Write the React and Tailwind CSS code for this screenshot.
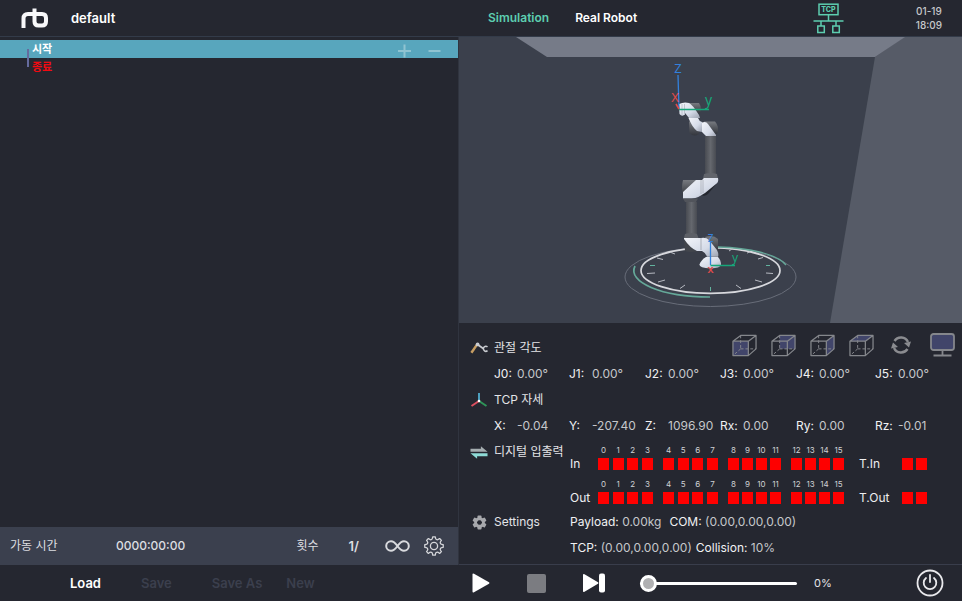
import React from "react";

const COLUMNS = "grid grid-cols-[458fr_504fr]";

function Logo() {
  return (
    <svg className="h-5 w-7" viewBox="0 0 28 20" fill="none" stroke="#f8f8fa" strokeWidth="4" aria-hidden="true">
      <path d="M2.500 20V10.500Q2.500 6 7 6H21Q25 6 25 10V13.500Q25 17.500 21 17.500H17.500Q13.500 17.500 13.500 13.500V0.500" />
    </svg>
  );
}

function NetworkIcon() {
  return (
    <svg className="h-[31px] w-[31px]" viewBox="0 0 31 31" fill="none" stroke="#5dceb0" strokeWidth="1.500" aria-label="TCP">
      <rect x="6" y="1.200" width="19" height="10.500" />
      <path d="M15.500 12V18M0.500 18H30.500M8 18V23M23 18V23" />
      <rect x="4.800" y="23" width="6.500" height="6.500" />
      <rect x="19.800" y="23" width="6.500" height="6.500" />
      <text x="15.500" y="9" textAnchor="middle" fontSize="7" fontWeight="800" fontFamily="Inter, sans-serif" fill="#5dceb0" stroke="none">TCP</text>
    </svg>
  );
}

function Scene() {
  const white = "url(#shell)";
  const dark = "url(#joint)";
  return (
    <svg className="block h-[286px] w-full bg-[#3b404c]" viewBox="459 37 503 286" preserveAspectRatio="xMidYMid slice" role="img" aria-label="Robot arm">
      <defs>
        <linearGradient id="shell" x1="0" y1="0" x2="1" y2="1">
          <stop offset="0" stopColor="#f3f5fa" />
          <stop offset="0.600" stopColor="#d5dbe8" />
          <stop offset="1" stopColor="#9ca2b0" />
        </linearGradient>
        <linearGradient id="joint" x1="0" y1="0" x2="0" y2="1">
          <stop offset="0" stopColor="#777a80" />
          <stop offset="0.500" stopColor="#54575d" />
          <stop offset="1" stopColor="#33363d" />
        </linearGradient>
        <linearGradient id="tube">
          <stop offset="0" stopColor="#484b52" />
          <stop offset="0.500" stopColor="#65686e" />
          <stop offset="1" stopColor="#484b52" />
        </linearGradient>
      </defs>
      <path d="M904 37H962V323H830L875 57Z" fill="#565b67" />
      <path d="M516 37H905L875 57H547Z" fill="#767b88" />

      <g fill="none">
        <ellipse cx="710.500" cy="277" rx="85.500" ry="29.500" stroke="#686d79" strokeWidth="1" />
        <ellipse cx="710.500" cy="270.500" rx="69.500" ry="22.800" fill="#3a3e49" stroke="#d7d8dd" strokeWidth="1.700" />
        <path d="M635 266C627 282 661 297 710 297" stroke="#65a899" strokeWidth="1.700" />
        <path d="M718 247C750 248 777 254 786 265" stroke="#65a899" strokeWidth="1.300" />
        <path d="M736 285L741 288.500M755 280L762 282M766 273L773 273.500M758 259L763 257.500M747 253L750 252M729 251L732 249M685 285L680 288.500M665 280L658 282M655 273L647 273.500M663 259.500L657 258M675 254L671 252.500" stroke="#b7bac2" />
        <path d="M710.500 287V291M766 265.500H770M650 265.500H655" stroke="#62b39e" />
      </g>

      <g>
        <path d="M687 103H699Q702 108 700 113L697 114Z" fill={dark} />
        <path d="M679 104Q684 101.500 689 103Q692 104 699 115L700 118H689L685 113V114.500Q682 117 679.500 114Z" fill={white} />
        <path d="M682 104V115M684.500 104V114" stroke="#9a9ea8" strokeWidth="0.500" />
        <path d="M689 121L699 130V134Q694 137.500 689.500 133Z" fill={dark} />
        <path d="M688.500 118H698Q699 121 702 122V132L697 131Q692 127 688.500 118Z" fill={white} />
        <path d="M704 121.500H715Q720 127 717 134L709 132Z" fill={dark} />
        <path d="M702 122.500Q706 121 708 124L716 135V137H707L702 132Z" fill={white} />
        <path d="M705 136H716V175H705Z" fill="url(#tube)" />
        <path d="M704 174Q711 172 717 174L718 179H703Z" fill="#62656c" />
        <path d="M683 180H699V196H683Q681 188 683 180Z" fill={dark} />
        <path d="M701 195L705 190L718 182L708 194Q705 197 701 195Z" fill="#24272f" />
        <path d="M683 192L696 180H702L704 178H718Q719 182 716 184L705 193L700 196Q697 199 683 198.500Z" fill={white} />
        <path d="M701 180V194M703 180V193" stroke="#888c95" strokeWidth="0.500" />
        <path d="M683 198.500H698L696 202H685Z" fill="#51545b" />
        <path d="M686 202H697V234H686Z" fill="url(#tube)" />
        <path d="M685 234Q691 232 697 234L698.500 238H684Z" fill="#5d6067" />
        <path d="M684 240L698 251Q690 253 685 251Z" fill="#42454c" />
        <path d="M705 237Q713 234 718 239V251L711 248Z" fill={dark} />
        <path d="M684 238H701Q706 237 709 240L717 250Q719 254 718 257H707Q706 253 702 251H697Q690 248 684 239Z" fill={white} />
        <path d="M701 238V250M707 256.500H718" stroke="#888c95" strokeWidth="0.600" />
        <path d="M706 257H718Q721 260 721 265Q720 268 711 268.500Q699 268 699.500 264.500Q701 260 706 257Z" fill={white} />
      </g>

      <g fill="none" strokeWidth="1.300">
        <path d="M678 75L679 109M710.500 242V265" stroke="#3281dd" />
        <path d="M679 109.500H709M710.500 265.500H735" stroke="#17a67a" />
        <path d="M676 104L679 109" stroke="#e04b4b" strokeWidth="1.600" />
      </g>
      <g fontFamily="Noto Sans, sans-serif" textAnchor="middle">
        <text x="678" y="73" fontSize="13" fill="#3281dd">Z</text>
        <text x="675" y="102" fontSize="13" fill="#e04b4b">X</text>
        <text x="708.500" y="105" fontSize="14" fill="#17a67a">y</text>
        <text x="710.500" y="242" fontSize="10" fill="#3281dd">Z</text>
        <text x="710.500" y="273" fontSize="9" fontWeight="700" fill="#e04b4b">X</text>
        <text x="735" y="262" fontSize="12" fill="#17a67a">y</text>
      </g>
    </svg>
  );
}

const FACES = {
  front: "M1 7H17V22H1Z",
  back: "M9 1H25V15H9Z",
  right: "M17 7L25 1V15L17 22Z",
  top: "M1 7L9 1H25L17 7Z",
};

function CubeIcon({ face }) {
  return (
    <svg className="h-[23px] w-[26px]" viewBox="0 0 26 23" fill="none" stroke="#85878c" strokeWidth="1.300" strokeLinejoin="round" aria-hidden="true">
      <path d={FACES[face]} fill="#41456a" stroke="none" />
      <path d="M1 7H17V22H1ZM1 7L9 1H25L17 7M25 1V15L17 22" />
      <path d="M9 1V15M9 15L1 22M9 15H25" strokeDasharray="3 2" strokeWidth="1" />
    </svg>
  );
}

function RefreshIcon() {
  return (
    <svg className="h-5 w-5" viewBox="0 0 20 20" fill="none" stroke="#8b8c90" strokeWidth="2.400" aria-hidden="true">
      <path d="M3.500 6A7.700 7.700 0 0 1 17 7M16.500 14A7.700 7.700 0 0 1 3 13" />
      <path d="M13 8L20 6.500L18 12.500ZM7 12L0 13.500L2 7.500Z" fill="#8b8c90" stroke="none" />
    </svg>
  );
}

function MonitorIcon() {
  return (
    <svg className="h-6 w-[25px]" viewBox="0 0 25 24" fill="#41456a" stroke="#85878c" strokeWidth="1.800" aria-hidden="true">
      <rect x="1" y="1" width="23" height="16" rx="2.500" />
      <path d="M12.500 17V22.500M3.500 22.500H21.500" />
    </svg>
  );
}

function JointIcon() {
  return (
    <svg className="h-3 w-[19px]" viewBox="0 0 19 12" fill="none" aria-hidden="true">
      <path d="M1.500 11L7 3" stroke="#c79e63" strokeWidth="2.600" />
      <path d="M7.500 2L14 6.500" stroke="#c9cbd0" strokeWidth="2" />
      <circle cx="8" cy="2.200" r="2" fill="#c9cbd0" />
      <path d="M18.500 4.800A2.600 2.600 0 1 0 18.500 8.800" stroke="#c9cbd0" strokeWidth="1.600" />
    </svg>
  );
}

function AxesIcon() {
  return (
    <svg className="h-[14px] w-[18px]" viewBox="0 0 18 14" strokeWidth="2" aria-hidden="true">
      <path d="M9 8V0" stroke="#4c9fbe" />
      <path d="M9 8L1.500 13" stroke="#dc5060" />
      <path d="M9 8L16.500 13" stroke="#2e9458" />
      <circle cx="9" cy="8" r="1.300" fill="#fff" />
    </svg>
  );
}

function SwapIcon() {
  return (
    <svg className="h-[13px] w-[19px]" viewBox="0 0 19 13" aria-hidden="true">
      <path d="M0.500 2.500H11.500V0L18.500 5.800H0.500Z" fill="#a5adb0" />
      <path d="M18.500 7.200H0.500L7.500 13V10.500H18.500Z" fill="#8edbd6" />
    </svg>
  );
}

const TEETH = [0, 60, 120, 180, 240, 300];

function GearIcon() {
  return (
    <svg className="h-[15px] w-[15px]" viewBox="0 0 16 16" fill="#a7a8ac" aria-hidden="true">
      {TEETH.map((a) => (
        <rect key={a} x="5.800" y="0.500" width="4.400" height="5" rx="1" transform={`rotate(${a} 8 8)`} />
      ))}
      <circle cx="8" cy="8" r="4.200" fill="none" stroke="#a7a8ac" strokeWidth="3" />
    </svg>
  );
}

const COG = Array.from({ length: 8 }, (_, i) => {
  const at = (r, deg) => {
    const t = ((i * 45 + deg) * Math.PI) / 180;
    return `${(10 + r * Math.sin(t)).toFixed(2)} ${(10 - r * Math.cos(t)).toFixed(2)}`;
  };
  return `${i ? "L" : "M"}${at(9.3, -8)}L${at(9.3, 8)}Q${at(6.6, 14)} ${at(7, 22.5)}Q${at(6.6, 31)} ${at(9.3, 37)}`;
}).join("") + "Z";

function CogOutlineIcon() {
  return (
    <svg className="h-5 w-5" viewBox="0 0 20 20" fill="none" stroke="#d5d6da" strokeWidth="1.300" strokeLinejoin="round" aria-hidden="true">
      <path d={COG} />
      <circle cx="10" cy="10" r="3.600" />
    </svg>
  );
}

function InfinityIcon() {
  return (
    <svg className="h-3 w-[25px]" viewBox="0 0 25 12" fill="none" stroke="#d9dade" strokeWidth="2" aria-hidden="true">
      <path d="M12.500 6C10 2.500 8.500 1.200 6 1.200A4.800 4.800 0 0 0 6 10.800C8.500 10.800 10 9.500 12.500 6C15 2.500 16.500 1.200 19 1.200A4.800 4.800 0 0 1 19 10.800C16.500 10.800 15 9.500 12.500 6Z" />
    </svg>
  );
}

function PowerIcon() {
  return (
    <svg className="h-7 w-7" viewBox="0 0 28 28" fill="none" stroke="#e9e9ec" strokeWidth="1.800" strokeLinecap="round" aria-hidden="true">
      <circle cx="14" cy="14" r="12.500" />
      <path d="M10 9A6.300 6.300 0 1 0 18 9M14 6V13" />
    </svg>
  );
}

function Heading({ icon, children }) {
  return (
    <h2 className="flex h-[26px] w-[100px] shrink-0 items-center gap-[6px] whitespace-nowrap text-[#e4e4e7]">
      <span className="flex w-[18px] justify-center">{icon}</span>
      {children}
    </h2>
  );
}

function Readings({ items }) {
  return (
    <dl className="ml-6 grid h-[26px] grid-cols-[75fr_76fr_75fr_76fr_79fr_80fr] items-center">
      {items.map(([label, value]) => (
        <div key={label} className="flex gap-px whitespace-nowrap">
          <dt className="w-[22px] text-[#f1f1f3]">{label}:</dt>
          <dd className="text-[#c6c7cb]">{value}</dd>
        </div>
      ))}
    </dl>
  );
}

const GROUPS = [
  { ports: [0, 1, 2, 3], width: "w-[55px]" },
  { ports: [4, 5, 6, 7], width: "w-[55px]" },
  { ports: [8, 9, 10, 11], width: "w-[53px]" },
  { ports: [12, 13, 14, 15], width: "w-[53px]" },
];

function PortRow({ name }) {
  return (
    <div className="flex items-end leading-3 text-[#eeeef0]">
      <span className="w-7">{name}</span>
      <div className="flex gap-[10px]">
        {GROUPS.map(({ ports, width }) => (
          <div key={ports[0]} className={`flex justify-between ${width}`}>
            {ports.map((n) => (
              <div key={n} className="flex w-[11px] flex-col items-center gap-[2px]">
                <span className="text-[8px] text-[#d0d1d4]">{n}</span>
                <span className="h-3 w-[11px] bg-[#fe0000]" />
              </div>
            ))}
          </div>
        ))}
      </div>
      <span className="ml-[15px] w-[43px]">T.{name}</span>
      <span className="mr-[3px] h-3 w-[11px] bg-[#fe0000]" />
      <span className="h-3 w-[11px] bg-[#fe0000]" />
    </div>
  );
}

function Field({ label, children }) {
  return (
    <span className="text-[#f1f1f3]">
      {label}: <span className="text-[#c6c7cb]">{children}</span>
    </span>
  );
}

export default function App() {
  return (
    <div className="flex min-h-screen flex-col bg-[#252730] font-['Inter','Noto_Sans_CJK_KR',sans-serif] text-[12px] leading-4 text-white">
      <header className={`${COLUMNS} h-[37px] border-b border-[#333b49]`}>
        <div className="flex items-center gap-[22px] pl-[21px]">
          <Logo />
          <h1 className="text-[13px] font-semibold">default</h1>
        </div>
        <div className="flex items-center pl-[30px] pr-5">
          <nav className="flex gap-[26px] text-[12px] font-semibold">
            <a href="#simulation" className="text-[#5dceb0]">Simulation</a>
            <a href="#real">Real Robot</a>
          </nav>
          <div className="ml-auto flex items-center gap-[72px]">
            <NetworkIcon />
            <time className="text-center text-[10px] font-medium leading-[14px] text-[#c6c7cb]">
              01-19
              <br />
              18:09
            </time>
          </div>
        </div>
      </header>

      <main className={`${COLUMNS} grow`}>
        <section className="flex flex-col">
          <ul className="grow pt-[3px] text-[11px] font-bold leading-[18px]">
            <li className="relative flex h-[18px] items-center bg-[#58a6bd] pl-8 pr-[17px]">
              시작
              <span className="absolute left-[27px] top-[9px] h-[18px] w-[2px] bg-[#656b9e]" />
              <div className="ml-auto flex gap-4">
                <button type="button" aria-label="Add" className="flex h-[18px] w-[15px] items-end">
                  <svg className="h-[14px] w-[15px]" viewBox="0 0 15 14" stroke="#8fc3d1" strokeWidth="2" aria-hidden="true"><path d="M1 7H14M7.500 0.500V13.500" /></svg>
                </button>
                <button type="button" aria-label="Remove" className="flex h-[18px] w-[13px] items-end">
                  <svg className="h-[14px] w-[13px]" viewBox="0 0 13 14" stroke="#8fc3d1" strokeWidth="2" aria-hidden="true"><path d="M0.500 7H12.500" /></svg>
                </button>
              </div>
            </li>
            <li className="h-[18px] pl-8 text-[#f30a12]">종료</li>
          </ul>
          <div className="flex h-[38px] items-center bg-[#3b404e] pl-[10px] pr-[14px] text-[#dddee1]">
            <span className="w-[106px]">가동 시간</span>
            <span className="font-medium">0000:00:00</span>
            <span className="ml-auto">횟수</span>
            <span className="ml-[30px] text-[13px] font-semibold">1/</span>
            <button type="button" aria-label="Repeat forever" className="ml-[26px]"><InfinityIcon /></button>
            <button type="button" aria-label="Options" className="ml-[14px]"><CogOutlineIcon /></button>
          </div>
        </section>

        <section className="flex flex-col border-l border-[#30343f]">
          <Scene />
          <div className="grow border-b border-[#393d4b] pl-[11px] pr-[7px] pt-3">
            <div className="flex h-[26px] items-center">
              <Heading icon={<JointIcon />}>관절 각도</Heading>
              <div className="mb-[6px] ml-auto flex items-center gap-[14px]">
                {["front", "back", "right", "top"].map((face) => (
                  <button key={face} type="button" aria-label={`View ${face}`} className="flex w-[25px] justify-center"><CubeIcon face={face} /></button>
                ))}
                <button type="button" aria-label="Reset view" className="flex w-[25px] justify-center"><RefreshIcon /></button>
                <button type="button" aria-label="Display" className="ml-[3px]"><MonitorIcon /></button>
              </div>
            </div>
            <Readings items={[["J0", "0.00°"], ["J1", "0.00°"], ["J2", "0.00°"], ["J3", "0.00°"], ["J4", "0.00°"], ["J5", "0.00°"]]} />
            <Heading icon={<AxesIcon />}>TCP 자세</Heading>
            <Readings items={[["X", "-0.04"], ["Y", "-207.40"], ["Z", "1096.90"], ["Rx", "0.00"], ["Ry", "0.00"], ["Rz", "-0.01"]]} />
            <div className="flex">
              <Heading icon={<SwapIcon />}>디지털 입출력</Heading>
              <div className="flex flex-col gap-2 py-[5px]">
                <PortRow name="In" />
                <PortRow name="Out" />
              </div>
            </div>
            <div className="flex">
              <Heading icon={<GearIcon />}>Settings</Heading>
              <div className="whitespace-nowrap leading-[26px]">
                <p className="flex gap-2">
                  <Field label="Payload">0.00kg</Field>
                  <Field label="COM">(0.00,0.00,0.00)</Field>
                </p>
                <p className="flex gap-1">
                  <Field label="TCP">(0.00,0.00,0.00)</Field>
                  <Field label="Collision">10%</Field>
                </p>
              </div>
            </div>
          </div>
        </section>
      </main>

      <footer className={`${COLUMNS} h-9`}>
        <div className="flex items-center gap-10 pl-[70px] text-[13px] font-semibold text-[#3b3f4d]">
          <button type="button" className="text-white">Load</button>
          <button type="button" disabled>Save</button>
          <div className="flex gap-6">
            <button type="button" disabled>Save As</button>
            <button type="button" disabled>New</button>
          </div>
        </div>
        <div className="flex items-center pl-[14px] pr-[18px]">
          <button type="button" aria-label="Play">
            <svg className="h-5 w-[18px]" viewBox="0 0 18 20" fill="#fff" aria-hidden="true"><path d="M0.500 1.500Q0.500 0 2 0.800L17 9.200Q18 10 17 10.800L2 19.200Q0.500 20 0.500 18.500Z" /></svg>
          </button>
          <button type="button" aria-label="Stop" className="ml-[37px] h-[19px] w-[19px] rounded-[2px] bg-[#7b7c81]" />
          <button type="button" aria-label="Step" className="ml-[37px]">
            <svg className="h-5 w-[22px]" viewBox="0 0 22 20" fill="#fff" aria-hidden="true">
              <path d="M0 2Q0 0.500 1.500 1.300L15 9.200Q16 10 15 10.800L1.500 18.700Q0 19.500 0 18Z" />
              <rect x="16" y="0.500" width="6" height="19" rx="2" />
            </svg>
          </button>
          <input
            type="range"
            min="0"
            max="100"
            defaultValue="0"
            aria-label="Speed"
            className="ml-[35px] h-5 w-[157px] appearance-none bg-transparent [&::-webkit-slider-runnable-track]:h-[3px] [&::-webkit-slider-runnable-track]:rounded-full [&::-webkit-slider-runnable-track]:bg-white [&::-webkit-slider-thumb]:mt-[-7px] [&::-webkit-slider-thumb]:h-[17px] [&::-webkit-slider-thumb]:w-[17px] [&::-webkit-slider-thumb]:appearance-none [&::-webkit-slider-thumb]:rounded-full [&::-webkit-slider-thumb]:border-[3px] [&::-webkit-slider-thumb]:border-white [&::-webkit-slider-thumb]:bg-[#b0b0b2]"
          />
          <output className="ml-[17px] text-[11px] text-[#e4e4e7]">0%</output>
          <button type="button" aria-label="Power" className="ml-auto"><PowerIcon /></button>
        </div>
      </footer>
    </div>
  );
}
